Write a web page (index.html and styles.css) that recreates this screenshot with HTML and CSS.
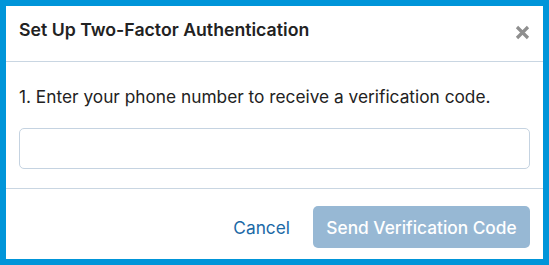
FILE: index.html
```html
<!DOCTYPE html>
<html>
<head>
<meta charset="utf-8">
<link rel="stylesheet" href="styles.css">
</head>
<body>
<div class="modal">
  <div class="modal-header">
    <h2 class="modal-title">Set Up Two-Factor Authentication</h2>
    <button class="close-btn" aria-label="Close">
      <svg width="15" height="15" viewBox="0 0 15 15"><path d="M2 2 L13 13 M13 2 L2 13" stroke="#8f8f8f" stroke-width="3.2" stroke-linecap="butt"/></svg>
    </button>
  </div>
  <div class="modal-body">
    <p class="instruction">1. Enter your phone number to receive a verification code.</p>
    <input class="phone-input" type="text">
  </div>
  <div class="modal-footer">
    <button class="btn-link">Cancel</button>
    <button class="btn-primary" disabled>Send Verification Code</button>
  </div>
</div>
</body>
</html>
```
FILE: styles.css
```css
html, body {
  margin: 0;
  padding: 0;
}
body {
  background: #0095d9;
  padding: 6px;
  width: 537px;
  height: 253px;
  font-family: Inter, "Noto Sans", sans-serif;
}
.modal {
  background: #fff;
  height: 253px;
  display: flex;
  flex-direction: column;
}
.modal-header {
  display: flex;
  align-items: flex-start;
  justify-content: space-between;
  padding: 12px 13px 19px 13px;
  border-bottom: 1px solid #c9d6e2;
}
.modal-title {
  margin: 0;
  font-size: 17.7px;
  line-height: 24px;
  font-weight: 600;
  color: #222;
}
.close-btn {
  border: 0;
  background: none;
  padding: 0;
  margin-top: 7px;
  width: 15px;
  height: 15px;
  display: flex;
}
.modal-body {
  padding: 23px 13px 19px 13px;
  border-bottom: 1px solid #c9d6e2;
}
.instruction {
  margin: 0 0 19px 0;
  font-size: 17.3px;
  line-height: 24px;
  color: #222;
}
.phone-input {
  display: block;
  box-sizing: border-box;
  width: 100%;
  height: 41px;
  border: 1px solid #c5d3e1;
  border-radius: 5px;
  margin: 0;
}
.modal-footer {
  flex: 1;
  display: flex;
  justify-content: flex-end;
  align-items: flex-start;
  padding: 17px 13px 0 13px;
  gap: 11px;
}
.btn-link {
  border: 0;
  background: none;
  font-family: inherit;
  font-size: 17.3px;
  color: #1b69a6;
  height: 42px;
  padding: 0 12px;
}
.btn-primary {
  border: 0;
  background: #97b8d4;
  color: #fff;
  font-family: inherit;
  font-size: 17.3px;
  font-weight: 500;
  height: 42px;
  width: 217px;
  border-radius: 5px;
  padding: 0;
}
```
